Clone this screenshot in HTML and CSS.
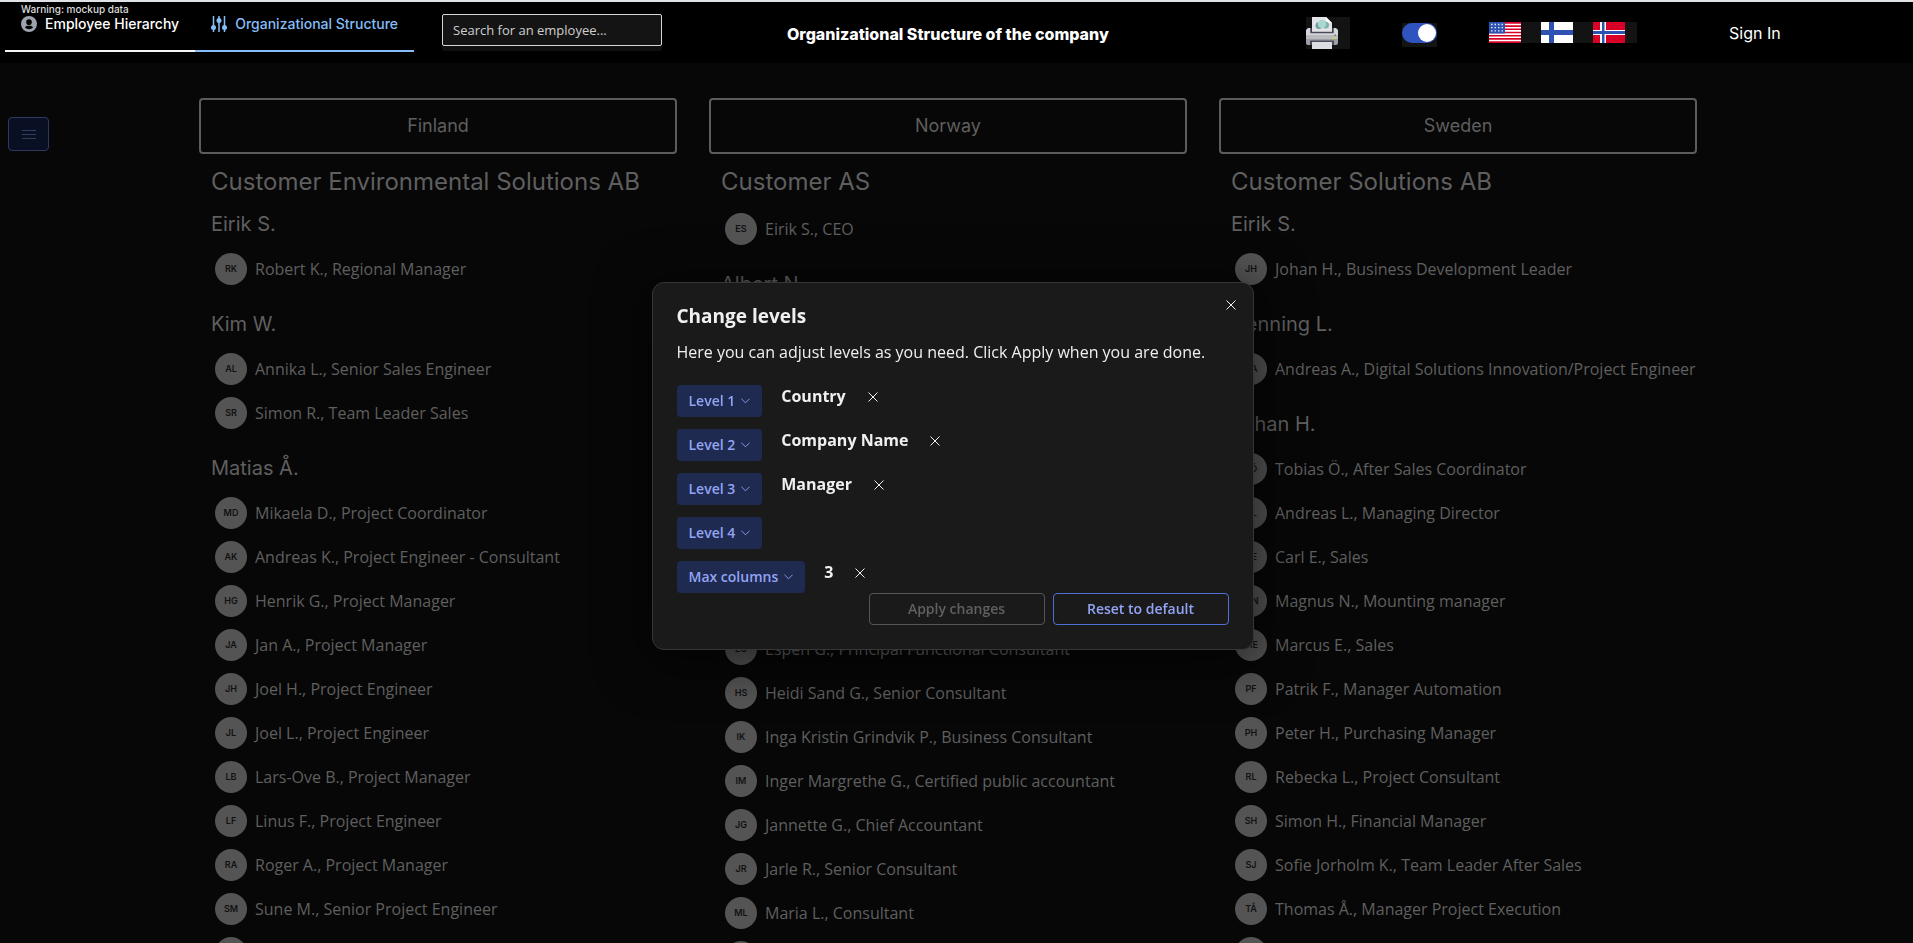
FILE: index.html
```html
<!DOCTYPE html>
<html lang="en">
<head>
<meta charset="utf-8">
<title>Organizational Structure</title>
<link rel="stylesheet" href="styles.css">
</head>
<body>
<header class="topbar">
  <nav class="tabs">
    <span class="warning">Warning: mockup data</span>
    <a class="tab" href="#hierarchy">
      <svg class="tab-icon" viewBox="0 0 20 20" aria-hidden="true"><path fill="#9ca3af" fill-rule="evenodd" d="M10 0a10 10 0 1 0 0 20 10 10 0 0 0 0-20Zm0 4.200a3.500 3.500 0 1 1 0 7 3.500 3.500 0 0 1 0-7Zm-5 10.300c.6-1.500 2-2.200 3.500-2.200h3c1.500 0 2.900.7 3.500 2.200a7 7 0 0 1-10 0Z"/></svg>
      Employee Hierarchy</a>
    <a class="tab tab-active" href="#structure">
      <svg class="tab-icon" viewBox="0 0 16 16" aria-hidden="true"><path stroke="currentColor" stroke-width="1.500" d="M2.500 0v16M8 0v16M13.500 0v16"/><g fill="currentColor"><circle cx="2.500" cy="11.500" r="2.500"/><circle cx="8" cy="4.500" r="2.500"/><circle cx="13.500" cy="11.500" r="2.500"/></g></svg>
      Organizational Structure</a>
  </nav>
  <div class="search"><input type="text" aria-label="Search for an employee" placeholder="Search for an employee..."></div>
  <h1 class="page-title">Organizational Structure of the company</h1>
  <div class="cell">
    <button class="print" aria-label="Print">
      <svg width="32" height="32" viewBox="0 0 32 32" aria-hidden="true">
        <path fill="#e4e4e8" d="M6 0h14l6 6v9H6z"/><path fill="#fff" d="M20 0v6h6z"/>
        <circle cx="13" cy="8.500" r="3.500" fill="#6f9f9e"/><circle cx="19.500" cy="8" r="3.500" fill="#7fb3ae"/><circle cx="16" cy="7" r="4.200" fill="#a9d8d2"/>
        <path fill="#d5d6da" d="M2 11h3v4h22v-4h3l2 2v7H0v-7z"/><path fill="#9b9ea3" d="M0 20h32v6q0 2-2 2H2q-2 0-2-2z"/>
        <path fill="none" stroke="#4b4c5a" stroke-width="1.500" d="M5 11v4.500h22V11"/><path fill="#b9bbbf" d="M0 18h32v4H0z"/>
        <path fill="#4b4c5a" d="M4 23.500h24V28H4z"/><path fill="#dcdde0" d="M6 25h20v7H6z"/>
        <path fill="#c8e04a" d="M26 20.500h1.500V22H26zM28.500 20.500H30V22h-1.500z"/><path fill="#777" d="M28.500 17.500H30V19h-1.500z"/>
      </svg>
    </button>
  </div>
  <div class="cell"><label class="switch"><input type="checkbox" checked aria-label="Dark mode"></label></div>
  <div class="flags">
    <button class="flag" aria-label="English">
      <svg width="32" height="21" viewBox="0 0 32 21" aria-hidden="true"><path fill="#d80027" d="M0 0h32v21H0z"/><path stroke="#fff" stroke-width="1.600" d="M0 2.500h32M0 5.700h32M0 8.900h32M0 12.100h32M0 15.300h32M0 18.500h32"/><path fill="#2e52b2" d="M0 0h16v11.500H0z"/><path stroke="#dfe5f5" stroke-width="1.300" stroke-dasharray="1.500 2" d="M2 2.500h13M2 5.700h13M2 8.900h13"/></svg>
    </button>
    <button class="flag" aria-label="Finnish">
      <svg width="32" height="21" viewBox="0 0 32 21" aria-hidden="true"><path fill="#fff" d="M0 0h32v21H0z"/><path fill="#2e52b2" d="M8 0h5v8h19v5H13v8H8v-8H0V8h8z"/></svg>
    </button>
    <button class="flag" aria-label="Norwegian">
      <svg width="32" height="21" viewBox="0 0 32 21" aria-hidden="true"><path fill="#d80027" d="M0 0h32v21H0z"/><path fill="#fff" d="M7 0h6v8h19v5H13v8H7v-8H0V8h7z"/><path fill="#2e52b2" d="M9 0h2.500v9H32v3H11.500v9H9v-9H0V9h9z"/></svg>
    </button>
  </div>
  <a class="signin" href="#signin">Sign In</a>
</header>

<div class="body">
  <aside class="side">
    <button class="menu" aria-label="Open levels"><svg width="14" height="10" viewBox="0 0 14 10" aria-hidden="true"><path stroke="#343b60" d="M0 1.500h14M0 5.500h14M0 9.500h14"/></svg></button>
  </aside>
  <main class="columns">
    <section class="column">
      <h2 class="country">Finland</h2>
      <h3 class="company">Customer Environmental Solutions AB</h3>
      <h4 class="manager">Eirik S.</h4>
      <ul class="people">
        <li><span class="avatar">RK</span>Robert K., Regional Manager</li>
      </ul>
      <h4 class="manager">Kim W.</h4>
      <ul class="people">
        <li><span class="avatar">AL</span>Annika L., Senior Sales Engineer</li>
        <li><span class="avatar">SR</span>Simon R., Team Leader Sales</li>
      </ul>
      <h4 class="manager">Matias Å.</h4>
      <ul class="people">
        <li><span class="avatar">MD</span>Mikaela D., Project Coordinator</li>
        <li><span class="avatar">AK</span>Andreas K., Project Engineer - Consultant</li>
        <li><span class="avatar">HG</span>Henrik G., Project Manager</li>
        <li><span class="avatar">JA</span>Jan A., Project Manager</li>
        <li><span class="avatar">JH</span>Joel H., Project Engineer</li>
        <li><span class="avatar">JL</span>Joel L., Project Engineer</li>
        <li><span class="avatar">LB</span>Lars-Ove B., Project Manager</li>
        <li><span class="avatar">LF</span>Linus F., Project Engineer</li>
        <li><span class="avatar">RA</span>Roger A., Project Manager</li>
        <li><span class="avatar">SM</span>Sune M., Senior Project Engineer</li>
        <li><span class="avatar"></span></li>
      </ul>
    </section>
    <section class="column">
      <h2 class="country">Norway</h2>
      <h3 class="company">Customer AS</h3>
      <ul class="people">
        <li><span class="avatar">ES</span>Eirik S., CEO</li>
      </ul>
      <h4 class="manager">Albert N.</h4>
      <ul class="people people-covered"></ul>
      <ul class="people">
        <li><span class="avatar">EG</span>Espen G., Principal Functional Consultant</li>
        <li><span class="avatar">HS</span>Heidi Sand G., Senior Consultant</li>
        <li><span class="avatar">IK</span>Inga Kristin Grindvik P., Business Consultant</li>
        <li><span class="avatar">IM</span>Inger Margrethe G., Certified public accountant</li>
        <li><span class="avatar">JG</span>Jannette G., Chief Accountant</li>
        <li><span class="avatar">JR</span>Jarle R., Senior Consultant</li>
        <li><span class="avatar">ML</span>Maria L., Consultant</li>
        <li><span class="avatar"></span></li>
      </ul>
    </section>
    <section class="column">
      <h2 class="country">Sweden</h2>
      <h3 class="company">Customer Solutions AB</h3>
      <h4 class="manager">Eirik S.</h4>
      <ul class="people">
        <li><span class="avatar">JH</span>Johan H., Business Development Leader</li>
      </ul>
      <h4 class="manager">Henning L.</h4>
      <ul class="people">
        <li><span class="avatar">AA</span>Andreas A., Digital Solutions Innovation/Project Engineer</li>
      </ul>
      <h4 class="manager">Johan H.</h4>
      <ul class="people">
        <li><span class="avatar">TÖ</span>Tobias Ö., After Sales Coordinator</li>
        <li><span class="avatar">AL</span>Andreas L., Managing Director</li>
        <li><span class="avatar">CE</span>Carl E., Sales</li>
        <li><span class="avatar">MN</span>Magnus N., Mounting manager</li>
        <li><span class="avatar">ME</span>Marcus E., Sales</li>
        <li><span class="avatar">PF</span>Patrik F., Manager Automation</li>
        <li><span class="avatar">PH</span>Peter H., Purchasing Manager</li>
        <li><span class="avatar">RL</span>Rebecka L., Project Consultant</li>
        <li><span class="avatar">SH</span>Simon H., Financial Manager</li>
        <li><span class="avatar">SJ</span>Sofie Jorholm K., Team Leader After Sales</li>
        <li><span class="avatar">TÅ</span>Thomas Å., Manager Project Execution</li>
        <li><span class="avatar"></span></li>
      </ul>
    </section>
  </main>
</div>

<div class="overlay">
  <div class="dialog" role="dialog" aria-labelledby="dialog-title">
    <button class="close" aria-label="Close"><svg class="x" viewBox="0 0 10 10" aria-hidden="true"><path d="M.5.5l9 9M9.500.5l-9 9"/></svg></button>
    <h2 class="dialog-title" id="dialog-title">Change levels</h2>
    <p class="dialog-text">Here you can adjust levels as you need. Click Apply when you are done.</p>
    <div class="levels">
      <div class="level">
        <button class="level-button">Level 1<svg class="chevron" viewBox="0 0 10 6" aria-hidden="true"><path d="M.5.5L5 5 9.500.5"/></svg></button>
        <span class="level-value">Country</span>
        <button class="clear" aria-label="Clear level 1"><svg class="x" viewBox="0 0 10 10" aria-hidden="true"><path d="M.5.5l9 9M9.500.5l-9 9"/></svg></button>
      </div>
      <div class="level">
        <button class="level-button">Level 2<svg class="chevron" viewBox="0 0 10 6" aria-hidden="true"><path d="M.5.5L5 5 9.500.5"/></svg></button>
        <span class="level-value">Company Name</span>
        <button class="clear" aria-label="Clear level 2"><svg class="x" viewBox="0 0 10 10" aria-hidden="true"><path d="M.5.5l9 9M9.500.5l-9 9"/></svg></button>
      </div>
      <div class="level">
        <button class="level-button">Level 3<svg class="chevron" viewBox="0 0 10 6" aria-hidden="true"><path d="M.5.5L5 5 9.500.5"/></svg></button>
        <span class="level-value">Manager</span>
        <button class="clear" aria-label="Clear level 3"><svg class="x" viewBox="0 0 10 10" aria-hidden="true"><path d="M.5.5l9 9M9.500.5l-9 9"/></svg></button>
      </div>
      <div class="level">
        <button class="level-button">Level 4<svg class="chevron" viewBox="0 0 10 6" aria-hidden="true"><path d="M.5.5L5 5 9.500.5"/></svg></button>
      </div>
      <div class="level">
        <button class="level-button">Max columns<svg class="chevron" viewBox="0 0 10 6" aria-hidden="true"><path d="M.5.5L5 5 9.500.5"/></svg></button>
        <span class="level-value">3</span>
        <button class="clear" aria-label="Clear max columns"><svg class="x" viewBox="0 0 10 10" aria-hidden="true"><path d="M.5.5l9 9M9.500.5l-9 9"/></svg></button>
      </div>
    </div>
    <div class="actions">
      <button class="action" disabled>Apply changes</button>
      <button class="action action-reset">Reset to default</button>
    </div>
  </div>
</div>
</body>
</html>
```
FILE: styles.css
```css
* { box-sizing: border-box; }

html { height: 100%; overflow: hidden; }

body {
  margin: 0;
  height: 100%;
  overflow: hidden;
  background: #070707;
  color: #5f5f5f;
  font: 16px/20px "Segoe UI", "Open Sans", sans-serif;
}

h1, h2, h3, h4, p, ul { margin: 0; padding: 0; font-weight: 400; }
ul { list-style: none; }
a { color: inherit; text-decoration: none; }
svg { display: block; }

button {
  margin: 0;
  padding: 0;
  border: 0;
  background: none;
  color: inherit;
  font: inherit;
}

/* Top bar */
.topbar {
  display: grid;
  grid-template-columns: 437fr 345fr 519fr 96fr 87fr 240fr 184fr;
  height: 63px;
  padding-left: 5px;
  border-top: 2px solid #dfe3e6;
  background: #000;
  color: #fff;
  font-family: Inter, sans-serif;
}

.tabs {
  position: relative;
  display: flex;
  align-items: flex-start;
}

.warning {
  position: absolute;
  left: 16px;
  top: 0;
  color: #ddd;
  font-size: 10px;
  font-weight: 500;
  line-height: 14px;
  white-space: nowrap;
}

.tab {
  display: flex;
  align-items: flex-start;
  gap: 8px;
  height: 50px;
  padding: 12px 16px 0;
  border-bottom: 2px solid #f3f4f6;
  font-size: 14px;
  font-weight: 500;
  line-height: 20px;
  white-space: nowrap;
}

.tab-active { border-color: #84bdf8; color: #84bdf8; }
.tab-icon { width: 16px; height: 16px; margin-top: 2px; }

.search { padding-top: 12px; }

.search input {
  display: block;
  width: 220px;
  height: 32px;
  padding: 0 10px;
  border: 1px solid #d6d6d6;
  border-radius: 2px;
  outline: 0;
  background: #141414;
  box-shadow: 0 5px 0 #101010;
  color: #fff;
  font: 13px/20px "Segoe UI", "Open Sans", sans-serif;
}

.search input::placeholder { color: #cfcfcf; opacity: 1; }

.page-title {
  padding-top: 22px;
  font-size: 16px;
  font-weight: 800;
  line-height: 20px;
  white-space: nowrap;
}

.cell { padding-top: 15px; }

.print { display: block; padding-right: 12px; background: #131313; }

.switch {
  display: block;
  width: 35px;
  height: 24px;
  margin-top: 6px;
  background: #131313;
}

.switch input {
  appearance: none;
  display: flex;
  justify-content: flex-end;
  width: 35px;
  height: 20px;
  margin: 0;
  padding: 1px;
  border-radius: 10px;
  background: #2f54bf;
}

.switch input::before {
  content: "";
  width: 18px;
  height: 18px;
  border-radius: 50%;
  background: #fff;
}

.flags { display: flex; align-items: flex-start; padding-top: 20px; }
.flag { padding-right: 20px; background: #131313; }
.flag:last-child { padding-right: 12px; }

.signin { padding-top: 21px; font-size: 16px; line-height: 20px; }

/* Body */
.body { display: flex; padding: 35px 216px 0 8px; }
.side { width: 191px; padding-top: 19px; }

.menu {
  display: grid;
  place-items: center;
  width: 41px;
  height: 34px;
  border: 1px solid #30385f;
  border-radius: 4px;
  background: #0a1024;
}

.columns {
  flex: 1;
  display: grid;
  grid-template-columns: repeat(3, minmax(0, 1fr));
  gap: 32px;
}

.country {
  padding: 16px;
  border: 2px solid #5c5c5c;
  border-radius: 4px;
  font: 18px/20px Inter, sans-serif;
  text-align: center;
}

.company {
  padding: 12px 12px 9px;
  font: 24px/32px Inter, sans-serif;
  white-space: nowrap;
}

.manager {
  padding: 19px 12px 9px;
  font: 20px/28px Inter, sans-serif;
}

.company + .manager { padding-top: 3px; }

.people li {
  display: flex;
  align-items: center;
  gap: 8px;
  height: 44px;
  padding-left: 16px;
  white-space: nowrap;
}

.people-covered { height: 320px; }

.avatar {
  width: 32px;
  height: 32px;
  border-radius: 50%;
  background: #545454;
  color: #111;
  font: 600 9px/32px Inter, sans-serif;
  text-align: center;
}

/* Dialog */
.overlay {
  position: fixed;
  inset: 0;
  display: grid;
  place-items: center;
  padding: 0 8px 12px 0;
}

.dialog {
  position: relative;
  width: 602px;
  padding: 24px;
  border: 1px solid #363636;
  border-radius: 12px;
  background: #1a1a1a;
  box-shadow: 0 8px 48px 8px rgba(0, 0, 0, 0.5);
  color: #f0f0f0;
}

.close {
  position: absolute;
  top: 12px;
  right: 12px;
  display: grid;
  place-items: center;
  width: 20px;
  height: 20px;
}

.x { width: 10px; height: 10px; fill: none; stroke: #f0f0f0; }
.dialog-title { font-size: 19px; font-weight: 700; line-height: 18px; }
.dialog-text { padding-top: 15px; line-height: 24px; }

.levels {
  display: flex;
  flex-direction: column;
  gap: 12px;
  padding-top: 21px;
}

.level { display: flex; align-items: flex-start; height: 32px; }

.level-button {
  display: flex;
  align-items: center;
  gap: 6px;
  height: 32px;
  padding: 0 12px;
  border-radius: 4px;
  background: #1e2a50;
  color: #93a4f4;
  font-size: 14px;
  font-weight: 600;
}

.chevron { width: 9px; height: 6px; fill: none; stroke: #93a4f4; }

.level-value {
  padding: 1px 22px 0 19px;
  font-weight: 700;
}

.clear { padding-top: 7px; }

.actions { display: flex; justify-content: flex-end; gap: 8px; }

.action {
  width: 176px;
  height: 32px;
  border: 1px solid #555;
  border-radius: 4px;
  color: #606060;
  font-size: 14px;
  font-weight: 600;
}

.action-reset { border-color: #4f6fd6; color: #93a4f4; }
```
